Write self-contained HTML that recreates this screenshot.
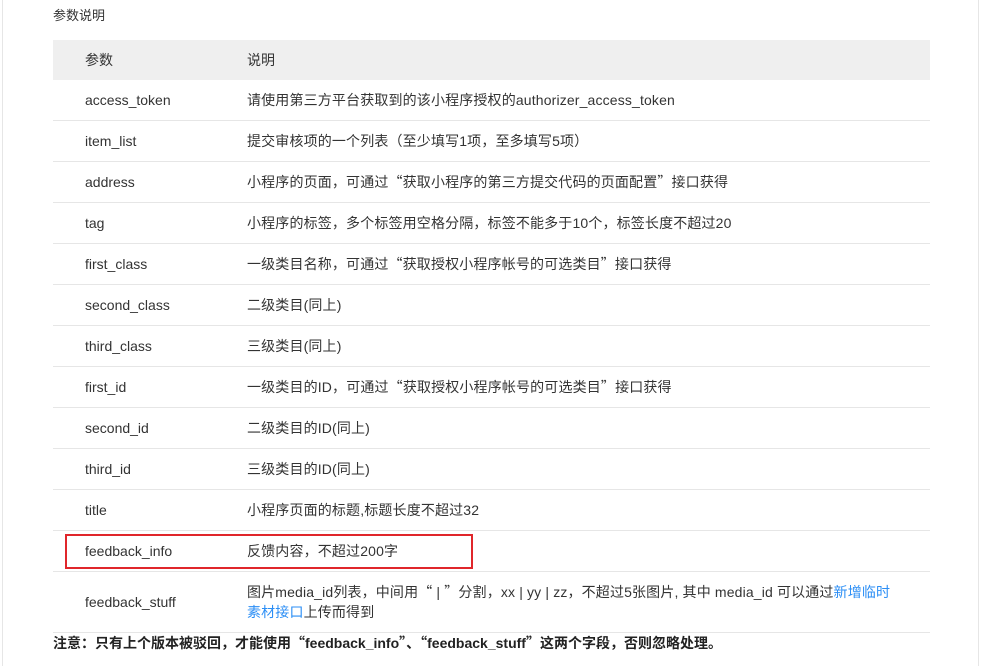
<!DOCTYPE html>
<html><head><meta charset="utf-8"><style>
body{margin:0;width:981px;height:666px;background:#fff;font-family:"Liberation Sans","Noto Sans CJK SC",sans-serif;color:#333;font-size:14px;position:relative;overflow:hidden}
.vl{position:absolute;top:0;bottom:0;width:1px;background:#e6e6e6}
.title{position:absolute;left:53px;top:6px;font-size:13px;line-height:20px}
table{position:absolute;left:53px;top:40px;width:877px;border-collapse:collapse}
td,th{padding:0;font-weight:normal;text-align:left;border-bottom:1px solid #e6e6e6;height:40px;vertical-align:middle;line-height:20px}
td+td{letter-spacing:0.15px}
th{background:#efefef;border:none;height:40px}
td:first-child,th:first-child{padding-left:32px;width:162px}
a{color:#2b8ef5;text-decoration:none}
.q{font-family:"Noto Sans CJK SC",sans-serif}
.red{position:absolute;left:65px;top:534px;width:404px;height:31px;border:2px solid #e0262b}
.note{position:absolute;left:53px;top:632px;font-weight:bold;font-size:14px;line-height:22px;color:#222}
</style></head><body>
<div class="vl" style="left:2px"></div><div class="vl" style="left:978px"></div>
<div class="title">参数说明</div>
<table>
<tr><th>参数</th><th>说明</th></tr>
<tr><td>access_token</td><td>请使用第三方平台获取到的该小程序授权的authorizer_access_token</td></tr>
<tr><td>item_list</td><td>提交审核项的一个列表（至少填写1项，至多填写5项）</td></tr>
<tr><td>address</td><td>小程序的页面，可通过<span class="q">“</span>获取小程序的第三方提交代码的页面配置<span class="q">”</span>接口获得</td></tr>
<tr><td>tag</td><td>小程序的标签，多个标签用空格分隔，标签不能多于10个，标签长度不超过20</td></tr>
<tr><td>first_class</td><td>一级类目名称，可通过<span class="q">“</span>获取授权小程序帐号的可选类目<span class="q">”</span>接口获得</td></tr>
<tr><td>second_class</td><td>二级类目(同上)</td></tr>
<tr><td>third_class</td><td>三级类目(同上)</td></tr>
<tr><td>first_id</td><td>一级类目的ID，可通过<span class="q">“</span>获取授权小程序帐号的可选类目<span class="q">”</span>接口获得</td></tr>
<tr><td>second_id</td><td>二级类目的ID(同上)</td></tr>
<tr><td>third_id</td><td>三级类目的ID(同上)</td></tr>
<tr><td>title</td><td>小程序页面的标题,标题长度不超过32</td></tr>
<tr><td>feedback_info</td><td>反馈内容，不超过200字</td></tr>
<tr><td style="height:60px">feedback_stuff</td><td>图片media_id列表，中间用<span class="q">“</span> | <span class="q">”</span>分割，xx | yy | zz，不超过5张图片, 其中 media_id 可以通过<a>新增临时<br>素材接口</a>上传而得到</td></tr>
</table>
<div class="red"></div>
<div class="note">注意：只有上个版本被驳回，才能使用<span class="q">“</span>feedback_info<span class="q">”</span>、<span class="q">“</span>feedback_stuff<span class="q">”</span>这两个字段，否则忽略处理。</div>
</body></html>
